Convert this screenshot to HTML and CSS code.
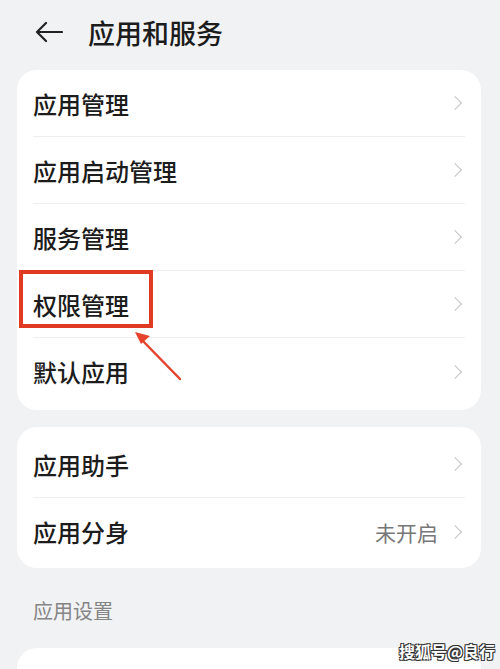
FILE: index.html
```html
<!DOCTYPE html>
<html lang="zh-CN">
<head>
    <meta charset="UTF-8">
    <meta name="viewport" content="width=device-width, initial-scale=1.0">
    <title>应用和服务</title>
    <link rel="stylesheet" href="styles.css">
</head>
<body>

<!-- Cabeçalho -->
<div class="header">
    <svg class="back" width="28" height="22" viewBox="0 0 28 22">
        <path d="M27 11 H2 M11 2 L2 11 L11 20" fill="none" stroke="#222" stroke-width="2.2" stroke-linecap="round" stroke-linejoin="round"/>
    </svg>
    <span class="title">应用和服务</span>
</div>

<div class="card first">
    <div class="row"><span>应用管理</span><i class="chev"></i></div>
    <div class="row"><span>应用启动管理</span><i class="chev"></i></div>
    <div class="row"><span>服务管理</span><i class="chev"></i></div>
    <div class="row"><span>权限管理</span><i class="chev"></i></div>
    <div class="row"><span>默认应用</span><i class="chev"></i></div>
</div>

<div class="card second">
    <div class="row"><span>应用助手</span><i class="chev"></i></div>
    <div class="row"><span>应用分身</span><span class="value">未开启</span><i class="chev"></i></div>
</div>

<div class="section">应用设置</div>
<div class="card third"></div>

<!-- Marcação vermelha -->
<div class="redBox"></div>
<svg class="pointer" width="60" height="60" viewBox="0 0 60 60">
    <path d="M50 55 L10 14" stroke="#e5432c" stroke-width="2.5" stroke-linecap="round"/>
    <path d="M5 8 L20 12 L11 20 Z" fill="#e5432c"/>
</svg>

<div class="watermark">搜狐号@良行</div>

</body>
</html>
```

FILE: styles.css
```css
body {
    margin: 0;
    padding: 0;
    background-color: #f1f2f4;
    font-family: "Noto Sans CJK SC", "Noto Sans", sans-serif;
    color: #1c1c1c;
    width: 500px;
    height: 669px;
    overflow: hidden;
    position: relative;
}

.header {
    height: 70px;
    display: flex;
    align-items: center;
    padding-left: 35px;
    padding-bottom: 6px;
    box-sizing: border-box;
}

.back {
    margin-right: 25px;
}

.title {
    font-size: 27px;
    font-weight: 500;
    color: #1c1c1c;
}

.card {
    background-color: #fff;
    border-radius: 20px;
    margin: 0 19px 0 17px;
}

.first {
    padding-bottom: 5px;
}

.second {
    margin-top: 17px;
    padding: 4px 0 3px;
}

.third {
    margin-top: 12px;
    height: 32px;
    border-radius: 20px 20px 0 0;
}

.row {
    height: 67px;
    margin: 0 16px;
    display: flex;
    align-items: center;
    border-bottom: 1px solid #efefef;
    box-sizing: border-box;
    font-size: 24px;
    font-weight: 500;
}

.row:last-child {
    border-bottom: none;
}

.row span:first-child {
    flex: 1;
}

.value {
    font-size: 21px;
    font-weight: 400;
    color: #777;
    margin-right: 12px;
}

.chev {
    width: 9px;
    height: 9px;
    border-top: 1.5px solid #c4c4c4;
    border-right: 1.5px solid #c4c4c4;
    transform: rotate(45deg);
    margin-right: 5px;
}

.section {
    font-size: 20px;
    color: #858585;
    padding: 28px 0 0 33px;
    height: 40px;
}

.redBox {
    position: absolute;
    left: 19px;
    top: 270px;
    width: 126px;
    height: 50px;
    border: 4px solid #e03a22;
}

.pointer {
    position: absolute;
    left: 130px;
    top: 324px;
}

.watermark {
    position: absolute;
    right: 5px;
    bottom: 6px;
    font-size: 16px;
    font-weight: bold;
    color: #fff;
    text-shadow: 1px 1px 0 #333, -1px -1px 0 #333, 1px -1px 0 #333, -1px 1px 0 #333;
}
```
